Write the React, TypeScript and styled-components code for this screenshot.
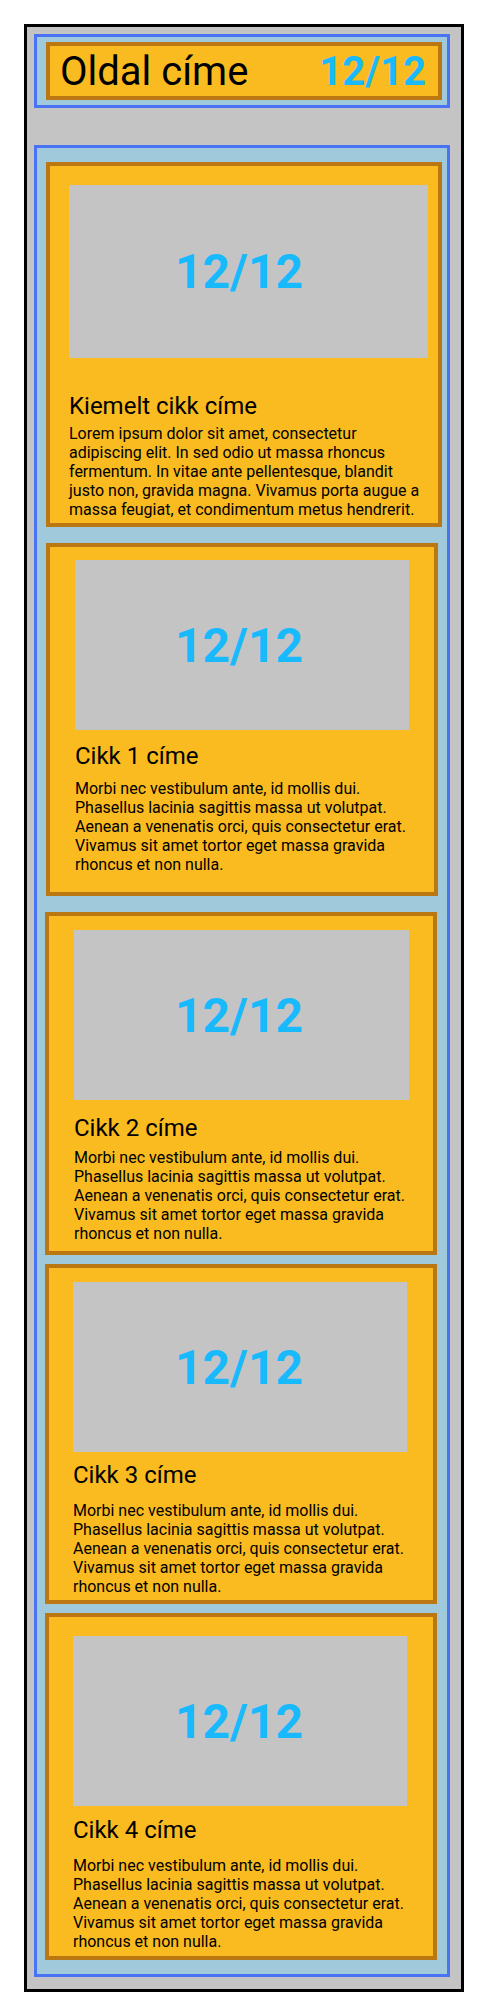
import React from 'react';
import styled, { createGlobalStyle } from 'styled-components';

const GlobalStyle = createGlobalStyle`
  * {
    box-sizing: border-box;
  }
  body {
    margin: 0;
    background: #ffffff;
    font-family: Roboto, 'Noto Sans', sans-serif;
  }
`;

const Frame = styled.div`
  width: 440px;
  margin: 24px 0 0 24px;
  border: 3px solid #000000;
  background: #c4c4c4;
  padding: 7px 11px 12px 7px;
  display: flex;
  flex-direction: column;
`;

const Section = styled.section<{ $pt: number; $pb: number; $mt?: number }>`
  border: 3px solid #4a72f5;
  background: #a0c9dc;
  padding: ${(p) => p.$pt}px 5px ${(p) => p.$pb}px 9px;
  margin-top: ${(p) => p.$mt || 0}px;
  display: flex;
  flex-direction: column;
`;

const HeaderBar = styled.header`
  height: 58px;
  border: 4px solid #bb7711;
  background: #f9bb1f;
  display: flex;
  align-items: center;
  justify-content: space-between;
  padding: 0 12px 0 10px;
`;

const PageTitle = styled.h1`
  margin: 0;
  font-family: Roboto, sans-serif;
  font-weight: 400;
  font-size: 40px;
  color: #000000;
`;

const Counter = styled.span<{ $size: number }>`
  font-family: Roboto, sans-serif;
  font-weight: 700;
  font-size: ${(p) => p.$size}px;
  color: #19b9fd;
`;

const Card = styled.article<{ $w: number; $x: number; $mt: number; $pt: number; $pl: number; $pb: number }>`
  width: ${(p) => p.$w}px;
  margin-left: ${(p) => p.$x}px;
  margin-top: ${(p) => p.$mt}px;
  border: 4px solid #bb7711;
  background: #f9bb1f;
  padding: ${(p) => p.$pt}px 0 ${(p) => p.$pb}px ${(p) => p.$pl}px;
  display: flex;
  flex-direction: column;
`;

const Thumb = styled.div<{ $w: number; $h: number; $gap: number; $nudge: number }>`
  width: ${(p) => p.$w}px;
  height: ${(p) => p.$h}px;
  margin-bottom: ${(p) => p.$gap}px;
  background: #c4c4c4;
  display: flex;
  align-items: center;
  justify-content: center;
  padding-right: ${(p) => p.$nudge}px;
`;

const CardTitle = styled.h2<{ $gap: number }>`
  margin: 0 0 ${(p) => p.$gap}px;
  font-family: Roboto, sans-serif;
  font-weight: 400;
  font-size: 24px;
  line-height: 28px;
  color: #000000;
`;

const CardText = styled.p<{ $w: number }>`
  margin: 0;
  width: ${(p) => p.$w}px;
  font-family: Roboto, sans-serif;
  font-size: 16px;
  line-height: 19px;
  color: #000000;
`;

const lead =
  'Lorem ipsum dolor sit amet, consectetur adipiscing elit. In sed odio ut massa rhoncus fermentum. In vitae ante pellentesque, blandit justo non, gravida magna. Vivamus porta augue a massa feugiat, et condimentum metus hendrerit.';
const filler =
  'Morbi nec vestibulum ante, id mollis dui. Phasellus lacinia sagittis massa ut volutpat. Aenean a venenatis orci, quis consectetur erat. Vivamus sit amet tortor eget massa gravida rhoncus et non nulla.';

const articles = [
  { title: 'Kiemelt cikk címe', text: lead, w: 396, x: 0, mt: 0, pt: 19, pl: 19, pb: 4, iw: 359, ih: 173, g1: 34, g2: 4, nudge: 19 },
  { title: 'Cikk 1 címe', text: filler, w: 392, x: 0, mt: 16, pt: 13, pl: 25, pb: 18, iw: 334, ih: 170, g1: 12, g2: 9, nudge: 6 },
  { title: 'Cikk 2 címe', text: filler, w: 392, x: -1, mt: 16, pt: 14, pl: 25, pb: 8, iw: 335, ih: 170, g1: 14, g2: 6, nudge: 5 },
  { title: 'Cikk 3 címe', text: filler, w: 392, x: -1, mt: 9, pt: 14, pl: 24, pb: 4, iw: 334, ih: 170, g1: 9, g2: 12, nudge: 2 },
  { title: 'Cikk 4 címe', text: filler, w: 392, x: -1, mt: 9, pt: 19, pl: 24, pb: 5, iw: 334, ih: 170, g1: 10, g2: 12, nudge: 2 },
];

const App = () => {
  return (
    <>
      <GlobalStyle />
      <Frame>
        <Section $pt={5} $pb={5}>
          <HeaderBar>
            <PageTitle>Oldal címe</PageTitle>
            <Counter $size={40}>12/12</Counter>
          </HeaderBar>
        </Section>
        <Section $pt={14} $pb={14} $mt={37}>
          {articles.map((a) => (
            <Card key={a.title} $w={a.w} $x={a.x} $mt={a.mt} $pt={a.pt} $pl={a.pl} $pb={a.pb}>
              <Thumb $w={a.iw} $h={a.ih} $gap={a.g1} $nudge={a.nudge}>
                <Counter $size={48}>12/12</Counter>
              </Thumb>
              <CardTitle $gap={a.g2}>{a.title}</CardTitle>
              <CardText $w={a.iw}>{a.text}</CardText>
            </Card>
          ))}
        </Section>
      </Frame>
    </>
  );
};

export default App;
